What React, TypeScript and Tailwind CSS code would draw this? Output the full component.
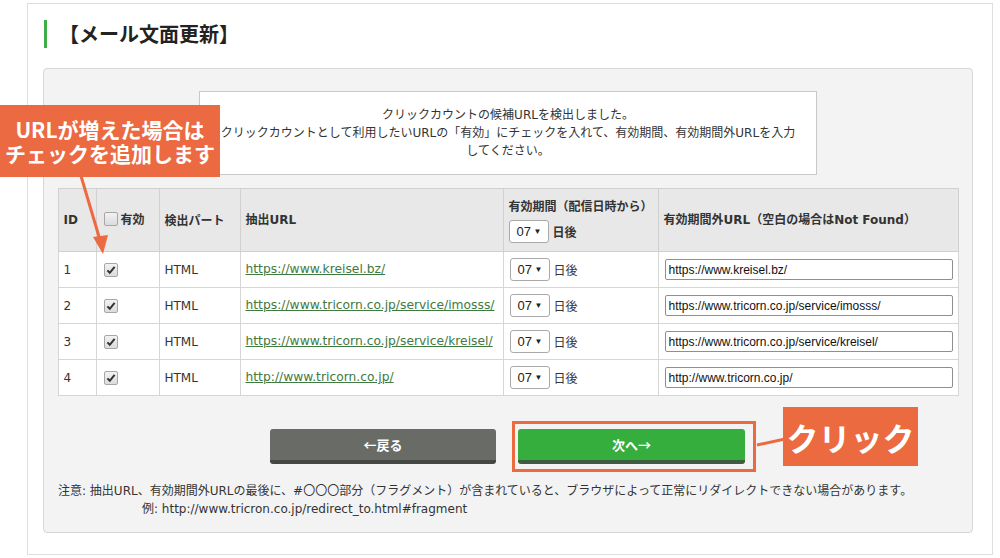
import React from "react";

const rows = [
  { id: 1, url: "https://www.kreisel.bz/" },
  { id: 2, url: "https://www.tricorn.co.jp/service/imosss/" },
  { id: 3, url: "https://www.tricorn.co.jp/service/kreisel/" },
  { id: 4, url: "http://www.tricorn.co.jp/" },
];

const jp = { fontFamily: '"DejaVu Sans", "Noto Sans CJK JP", sans-serif' };
const jpOnly = { fontFamily: '"Noto Sans CJK JP", sans-serif' };

function CheckBox({ checked }: { checked?: boolean }) {
  return (
    <span className="inline-flex h-[14px] w-[14px] items-center justify-center rounded-[2px] border border-[#a7a7a7] bg-gradient-to-b from-[#f2f2f2] to-[#dcdcdc] align-middle">
      {checked && (
        <svg width="10" height="10" viewBox="0 0 10 10">
          <path d="M1.4 5.4 L3.8 7.8 L8.6 1.8" fill="none" stroke="#333" strokeWidth="2" />
        </svg>
      )}
    </span>
  );
}

function DaySelect({ bold }: { bold?: boolean }) {
  return (
    <span className="inline-flex items-center">
      <span className="inline-flex h-[23px] w-[40px] items-center justify-between rounded-[3px] border border-[#a9a9a9] bg-white pl-[7px] pr-[6px] text-[13px] font-normal text-[#222]" style={{ fontFamily: '"Liberation Sans", sans-serif' }}>
        07
        <span className="text-[8px]">▼</span>
      </span>
      <span className={`ml-[4px] text-[12px] ${bold ? "font-bold" : ""}`} style={jpOnly}>
        日後
      </span>
    </span>
  );
}

export default function App() {
  return (
    <div className="relative h-[558px] w-[1000px] overflow-hidden bg-white text-[#333]" style={jp}>
      <div className="ml-[27px] mt-[3px] h-[552px] w-[966px] border border-[#dedede]">
        <div className="ml-[16px] mt-[16px] flex h-[28px] items-center border-l-[3px] border-[#3fae47] pl-[12px] text-[20px] font-bold text-[#222]" style={jpOnly}>
          【メール文面更新】
        </div>

        <div className="ml-[15px] mt-[20px] h-[465px] w-[930px] rounded-[4px] border border-[#d6d6d6] bg-[#f3f3f3] pt-[22px]">
          <div className="mx-auto flex h-[84px] w-[618px] flex-col items-center justify-center border border-[#c9c9c9] bg-white text-center text-[12px] leading-[18px] text-[#333]">
            <p>クリックカウントの候補URLを検出しました。</p>
            <p>クリックカウントとして利用したいURLの「有効」にチェックを入れて、有効期間、有効期間外URLを入力</p>
            <p>してください。</p>
          </div>

          <table className="mx-auto mt-[13px] w-[901px] table-fixed border-collapse text-[12px]">
            <colgroup>
              <col className="w-[38px]" />
              <col className="w-[63px]" />
              <col className="w-[81px]" />
              <col className="w-[263px]" />
              <col className="w-[155px]" />
              <col />
            </colgroup>
            <thead>
              <tr className="h-[63px] bg-[#e8e8e8] text-left font-bold text-[#333]">
                <th className="border border-[#d0d0d0] px-[5px]">ID</th>
                <th className="border border-[#d0d0d0] px-[7px]">
                  <span className="inline-flex items-center gap-[3px]">
                    <CheckBox />
                    <span style={jpOnly}>有効</span>
                  </span>
                </th>
                <th className="border border-[#d0d0d0] px-[5px]" style={jpOnly}>検出パート</th>
                <th className="border border-[#d0d0d0] px-[5px]">抽出URL</th>
                <th className="border border-[#d0d0d0] px-[5px]">
                  <div className="leading-[18px]" style={jpOnly}>有効期間（配信日時から）</div>
                  <div className="mt-[5px]">
                    <DaySelect bold />
                  </div>
                </th>
                <th className="border border-[#d0d0d0] px-[5px]">有効期間外URL（空白の場合はNot Found）</th>
              </tr>
            </thead>
            <tbody>
              {rows.map((r) => (
                <tr key={r.id} className="h-[36px] bg-white">
                  <td className="border border-[#d6d6d6] px-[5px]">{r.id}</td>
                  <td className="border border-[#d6d6d6] px-[7px]">
                    <CheckBox checked />
                  </td>
                  <td className="border border-[#d6d6d6] px-[5px]">HTML</td>
                  <td className="border border-[#d6d6d6] px-[5px] whitespace-nowrap">
                    <a className="text-[12.3px] text-[#417a41] underline">{r.url}</a>
                  </td>
                  <td className="border border-[#d6d6d6] px-[6px]">
                    <DaySelect />
                  </td>
                  <td className="border border-[#d6d6d6] px-[6px]">
                    <div className="flex h-[21px] w-[288px] items-center rounded-[2px] border border-[#8f8f8f] bg-white px-[3px] text-[12px] text-[#111]" style={{ fontFamily: '"Liberation Sans", sans-serif' }}>
                      {r.url}
                    </div>
                  </td>
                </tr>
              ))}
            </tbody>
          </table>

          <div className="mt-[33px] flex justify-center gap-[22px] pr-[1px]">
            <button className="h-[35px] w-[226px] rounded-[3px] border-b-[4px] border-[#454744] bg-[#686b66] text-[13px] font-bold text-white" style={jpOnly}>
              ←戻る
            </button>
            <div className="relative">
              <button className="h-[35px] w-[227px] rounded-[3px] border-b-[4px] border-[#3e5c3f] bg-[#35ae3e] text-[13px] font-bold text-white" style={jpOnly}>
                次へ→
              </button>
              <div className="absolute -bottom-[8px] -left-[6px] -right-[11px] -top-[8px] border-[3px] border-[#ec6a40]" />
            </div>
          </div>

          <div className="mt-[18px] pl-[14px] text-[12px] leading-[18px] text-[#333]">
            <p>注意: 抽出URL、有効期間外URLの最後に、#〇〇〇部分（フラグメント）が含まれていると、ブラウザによって正常にリダイレクトできない場合があります。</p>
            <p className="pl-[84px]">例: http://www.tricron.co.jp/redirect_to.html#fragment</p>
          </div>
        </div>
      </div>

      {/* top-left callout */}
      <div className="absolute left-0 top-[105px] flex h-[72px] w-[220px] flex-col items-center justify-center bg-[#ec6a41] text-[21px] font-bold leading-[24px] text-white" style={{ fontFamily: '"Noto Sans CJK JP", sans-serif' }}>
        <span>URLが増えた場合は</span>
        <span>チェックを追加します</span>
      </div>
      <svg className="absolute left-0 top-0" width="200" height="270" viewBox="0 0 200 270">
        <line x1="81" y1="176" x2="100" y2="240" stroke="#ec6a41" strokeWidth="3" />
        <polygon points="103,254 93,237 108,235" fill="#ec6a41" />
      </svg>

      {/* click callout */}
      <svg className="absolute left-[755px] top-[436px]" width="32" height="12" viewBox="0 0 32 12">
        <line x1="2" y1="9" x2="30" y2="3" stroke="#ec6a40" strokeWidth="3" />
      </svg>
      <div className="absolute left-[783px] top-[407px] flex h-[59px] w-[135px] items-center justify-center bg-[#ec6a40] text-[32px] font-bold text-white" style={{ fontFamily: '"Noto Sans CJK JP", sans-serif' }}>
        クリック
      </div>
    </div>
  );
}
